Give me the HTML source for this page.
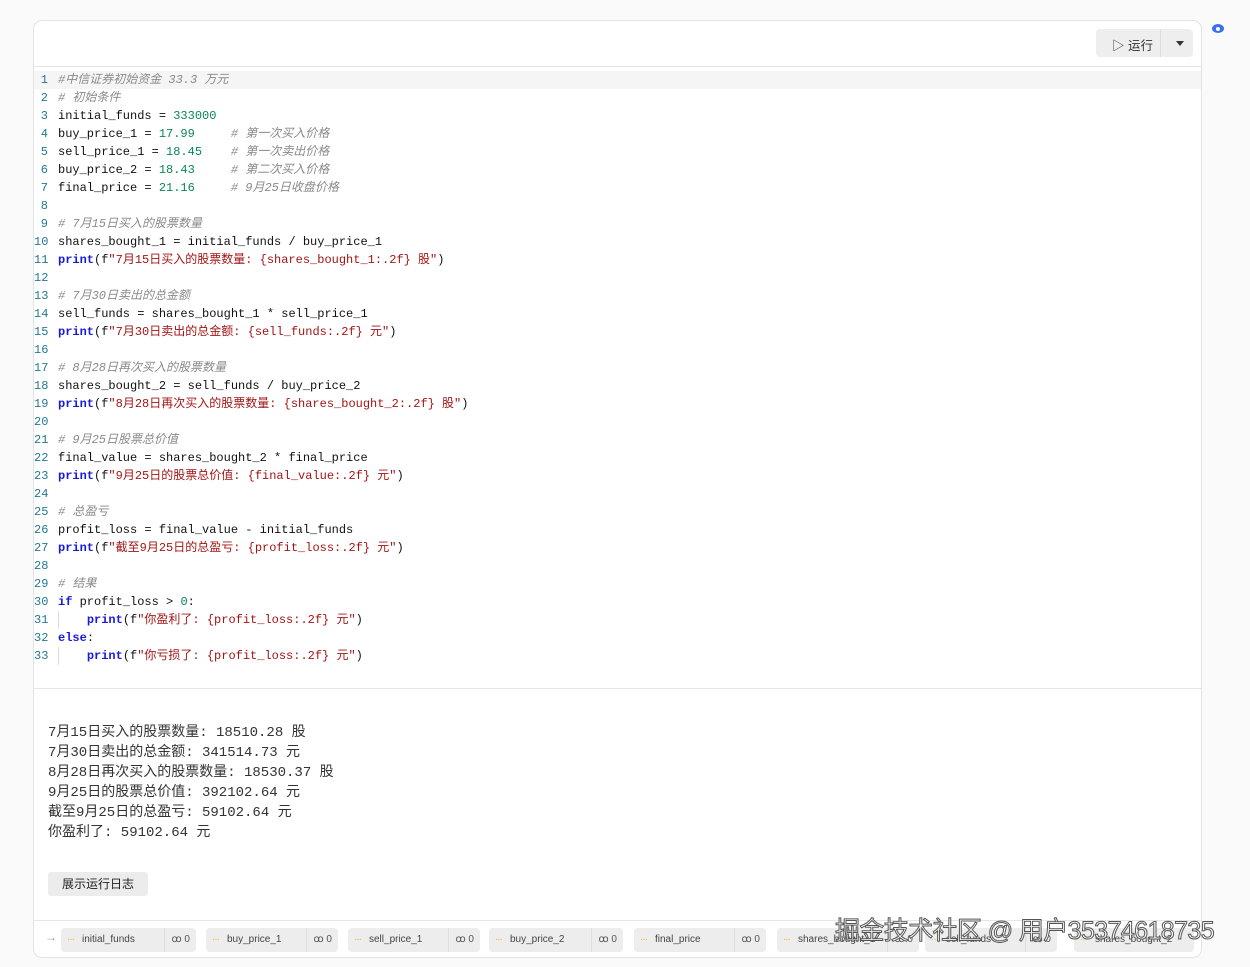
<!DOCTYPE html>
<html><head><meta charset="utf-8"><style>
body{margin:0;background:#fafafa;width:1250px;height:967px;position:relative;overflow:hidden;font-family:"Liberation Sans","Noto Sans CJK SC",sans-serif}
.card{position:absolute;left:33px;top:20px;width:1167px;height:936px;background:#fff;border:1px solid #e3e3e3;border-radius:9px}
.hdr{position:absolute;left:0;top:0;width:100%;height:45px;border-bottom:1px solid #e6e6e6}
.run{position:absolute;left:1062px;top:8px;width:97px;height:28px;background:#eeeeee;border-radius:4px;font-size:12.5px;color:#333}
.run .l{position:absolute;left:16px;top:6px}
.run .sep{position:absolute;left:64px;top:0;width:1px;height:28px;background:#dcdcdc}
.run .ar{position:absolute;left:80px;top:12px;border-left:4px solid transparent;border-right:4px solid transparent;border-top:5px solid #333}
.code{position:absolute;left:0;top:50px;width:100%;font-family:"Liberation Mono","Noto Sans CJK SC",monospace;font-size:12px}
.ln{height:18px;line-height:18px;white-space:pre;position:relative;color:#111;padding-left:24px}
.ln .n{position:absolute;left:0;width:14px;color:#237893;text-align:right}
.ln.hl{background:#f5f5f5}
.c{color:#8a8a8a;font-style:italic}.num{color:#098658}.k{color:#1a1adb;font-weight:bold}.s{color:#a31515}
.guide{position:absolute;top:0;left:24px;width:1px;height:18px;background:#ddd}
.out{position:absolute;left:0;top:667px;width:100%;border-top:1px solid #e6e6e6}
.res{position:absolute;left:14px;top:34px;font-family:"Liberation Mono","Noto Sans CJK SC",monospace;font-size:14px;line-height:20px;color:#333;white-space:pre}
.log{position:absolute;left:14px;top:183px;width:100px;height:24px;background:#ececec;border-radius:3px;font-size:12px;line-height:24px;text-align:center;color:#222}
.foot{position:absolute;left:0;top:899px;width:100%;height:37px;border-top:1px solid #e6e6e6}
.arrow{position:absolute;left:11px;top:9px;color:#999;font-size:12px}
.chip{position:absolute;top:7px;height:24px;background:#ededed;border-radius:4px;font-size:10px;line-height:24px;color:#444;white-space:nowrap}
.chip .d{color:#f0b030;margin:0 8px 0 6px;letter-spacing:-1px}
.chip .r{position:absolute;right:0;top:0;height:24px;border-left:1px solid #ddd;padding:0 6px;color:#555}
.wm{position:absolute;left:835px;top:911px;font-size:25px;color:#fff;-webkit-text-stroke:1px #555;letter-spacing:-0.6px;white-space:nowrap}
.eye{position:absolute;left:1212px;top:24px;width:12px;height:9px;background:#3b6ff0;border-radius:50%}
.eye:after{content:"";position:absolute;left:4px;top:2.5px;width:4px;height:4px;border-radius:50%;background:#fff}
</style></head><body>
<div class="card">
<div class="hdr"><div class="run"><span class="l">▷ 运行</span><div class="sep"></div><div class="ar"></div></div></div>
<div class="code">
<div class="ln hl"><span class="n">1</span><span class="c">#中信证券初始资金 33.3 万元</span></div>
<div class="ln"><span class="n">2</span><span class="c"># 初始条件</span></div>
<div class="ln"><span class="n">3</span>initial_funds = <span class="num">333000</span></div>
<div class="ln"><span class="n">4</span>buy_price_1 = <span class="num">17.99</span>     <span class="c"># 第一次买入价格</span></div>
<div class="ln"><span class="n">5</span>sell_price_1 = <span class="num">18.45</span>    <span class="c"># 第一次卖出价格</span></div>
<div class="ln"><span class="n">6</span>buy_price_2 = <span class="num">18.43</span>     <span class="c"># 第二次买入价格</span></div>
<div class="ln"><span class="n">7</span>final_price = <span class="num">21.16</span>     <span class="c"># 9月25日收盘价格</span></div>
<div class="ln"><span class="n">8</span></div>
<div class="ln"><span class="n">9</span><span class="c"># 7月15日买入的股票数量</span></div>
<div class="ln"><span class="n">10</span>shares_bought_1 = initial_funds / buy_price_1</div>
<div class="ln"><span class="n">11</span><span class="k">print</span>(f<span class="s">"7月15日买入的股票数量: {shares_bought_1:.2f} 股"</span>)</div>
<div class="ln"><span class="n">12</span></div>
<div class="ln"><span class="n">13</span><span class="c"># 7月30日卖出的总金额</span></div>
<div class="ln"><span class="n">14</span>sell_funds = shares_bought_1 * sell_price_1</div>
<div class="ln"><span class="n">15</span><span class="k">print</span>(f<span class="s">"7月30日卖出的总金额: {sell_funds:.2f} 元"</span>)</div>
<div class="ln"><span class="n">16</span></div>
<div class="ln"><span class="n">17</span><span class="c"># 8月28日再次买入的股票数量</span></div>
<div class="ln"><span class="n">18</span>shares_bought_2 = sell_funds / buy_price_2</div>
<div class="ln"><span class="n">19</span><span class="k">print</span>(f<span class="s">"8月28日再次买入的股票数量: {shares_bought_2:.2f} 股"</span>)</div>
<div class="ln"><span class="n">20</span></div>
<div class="ln"><span class="n">21</span><span class="c"># 9月25日股票总价值</span></div>
<div class="ln"><span class="n">22</span>final_value = shares_bought_2 * final_price</div>
<div class="ln"><span class="n">23</span><span class="k">print</span>(f<span class="s">"9月25日的股票总价值: {final_value:.2f} 元"</span>)</div>
<div class="ln"><span class="n">24</span></div>
<div class="ln"><span class="n">25</span><span class="c"># 总盈亏</span></div>
<div class="ln"><span class="n">26</span>profit_loss = final_value - initial_funds</div>
<div class="ln"><span class="n">27</span><span class="k">print</span>(f<span class="s">"截至9月25日的总盈亏: {profit_loss:.2f} 元"</span>)</div>
<div class="ln"><span class="n">28</span></div>
<div class="ln"><span class="n">29</span><span class="c"># 结果</span></div>
<div class="ln"><span class="n">30</span><span class="k">if</span> profit_loss &gt; <span class="num">0</span>:</div>
<div class="ln"><span class="n">31</span>    <span class="k">print</span>(f<span class="s">"你盈利了: {profit_loss:.2f} 元"</span>)<div class="guide"></div></div>
<div class="ln"><span class="n">32</span><span class="k">else</span>:</div>
<div class="ln"><span class="n">33</span>    <span class="k">print</span>(f<span class="s">"你亏损了: {profit_loss:.2f} 元"</span>)<div class="guide"></div></div>
</div>
<div class="out">
<div class="res">7月15日买入的股票数量: 18510.28 股
7月30日卖出的总金额: 341514.73 元
8月28日再次买入的股票数量: 18530.37 股
9月25日的股票总价值: 392102.64 元
截至9月25日的总盈亏: 59102.64 元
你盈利了: 59102.64 元</div>
<div class="log">展示运行日志</div>
</div>
<div class="foot">
<span class="arrow">→</span>
<div class="chip" style="left:27px;width:135px"><span class="d">···</span>initial_funds<span class="r">ꝏ 0</span></div>
<div class="chip" style="left:172px;width:132px"><span class="d">···</span>buy_price_1<span class="r">ꝏ 0</span></div>
<div class="chip" style="left:314px;width:132px"><span class="d">···</span>sell_price_1<span class="r">ꝏ 0</span></div>
<div class="chip" style="left:455px;width:134px"><span class="d">···</span>buy_price_2<span class="r">ꝏ 0</span></div>
<div class="chip" style="left:600px;width:132px"><span class="d">···</span>final_price<span class="r">ꝏ 0</span></div>
<div class="chip" style="left:743px;width:142px"><span class="d">···</span>shares_bought_1<span class="r">ꝏ 0</span></div>
<div class="chip" style="left:891px;width:132px"><span class="d">···</span>sell_funds<span class="r">ꝏ 0</span></div>
<div class="chip" style="left:1040px;width:120px"><span class="d">···</span>shares_bought_2</div>
</div>
</div>
<div class="eye"></div>
<div class="wm">掘金技术社区 @ 用户35374618735</div>
</body></html>
